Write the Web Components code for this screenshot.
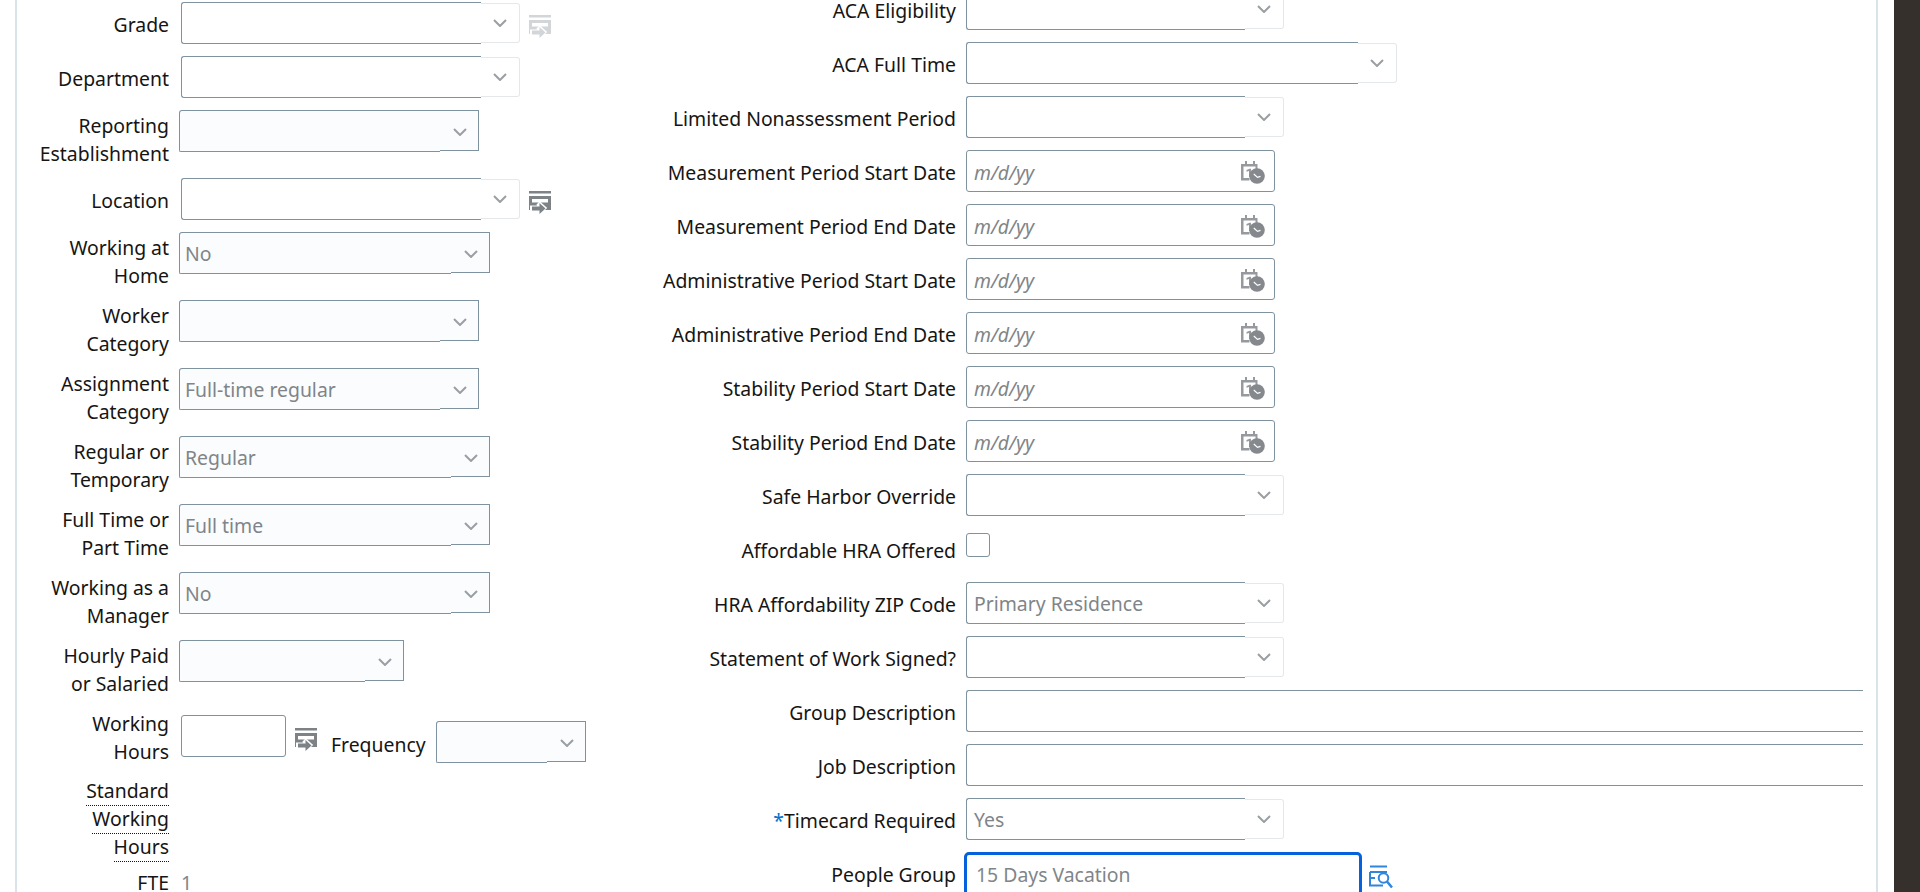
<!DOCTYPE html>
<html>
<head>
<meta charset="utf-8">
<title>Assignment details</title>
<style>
  html, body { margin: 0; height: 892px; overflow: hidden; background: #fff; }
  body { font: 19.4px/28px "Noto Sans", "Open Sans", sans-serif; color: #161513; }
</style>
</head>
<body>
<template id="detail-icon">
  <svg width="22" height="23" viewBox="0 0 22 23">
    <path fill="currentColor" d="M0 0h22v2.500H0zM0 5h22v14H0zM3 8v3.500h16V8z" fill-rule="evenodd"/>
    <path d="M1 17h11M9 12l5.500 5-5.500 5" fill="none" stroke="#fff" stroke-width="5"/>
    <path fill="currentColor" d="M3 15.500h7.500V12l6 5.500-6 5.500v-3.500H3z"/>
  </svg>
</template>

<script>
const chevron = `<svg width="14" height="8" viewBox="0 0 14 8"><path d="M1 1l6 6 6-6" fill="none" stroke="#9a9fa3" stroke-width="2"/></svg>`;

class PageShell extends HTMLElement {
  constructor() {
    super();
    this.attachShadow({ mode: 'open' }).innerHTML = `
      <style>
        :host { display: flex; height: 892px; overflow: hidden; }
        .panel {
          flex: 1;
          margin-left: 15px;
          margin-right: 16px;
          border: solid #d9e3ea;
          border-width: 0 2px;
          display: flex;
          padding-right: 13px;
        }
        .left { width: 623px; display: flex; flex-direction: column; padding-top: 2px; flex: none; }
        .right { flex: 1; min-width: 0; display: flex; flex-direction: column; margin-top: -12px; }
        .rail { width: 26px; background: #35302c; flex: none; }
      </style>
      <div class="panel">
        <div class="left"><slot name="left"></slot></div>
        <div class="right"><slot name="right"></slot></div>
      </div>
      <div class="rail"></div>`;
  }
}

class FormRow extends HTMLElement {
  constructor() {
    super();
    this.attachShadow({ mode: 'open' });
  }
  connectedCallback() {
    const w = this.getAttribute('label-width') || '152px';
    const gap = this.getAttribute('label-gap') || '12px';
    const req = this.hasAttribute('required') ? '<b>*</b>' : '';
    const dotted = this.hasAttribute('dotted');
    const lines = (this.getAttribute('label') || '').split('|');
    const text = lines.map(l => dotted ? `<u>${l}</u>` : l).join('<br>');
    const two = lines.length > 1;
    this.shadowRoot.innerHTML = `
      <style>
        :host { display: flex; align-items: flex-start; min-height: 42px; margin-bottom: ${this.getAttribute('after') || (two ? '10px' : '12px')}; }
        .label {
          width: ${w};
          flex: none;
          text-align: right;
          padding-top: ${this.getAttribute('label-top') || (two ? '2px' : '9px')};
          margin-right: ${gap};
        }
        b { font-weight: 400; color: #0572ce; }
        u { text-decoration: none; border-bottom: 1px dotted #161513; display: inline-block; line-height: 26px; height: 27px; vertical-align: top; }
        .field { display: flex; align-items: flex-start; gap: 8px; min-width: 0; flex: 1; }
      </style>
      <div class="label">${req}${text}</div>
      <div class="field"><slot></slot></div>`;
  }
}

class ComboBox extends HTMLElement {
  constructor() {
    super();
    this.attachShadow({ mode: 'open' });
  }
  connectedCallback() {
    const w = +this.getAttribute('width');
    const value = this.getAttribute('value') || '';
    const tint = this.hasAttribute('tint');
    this.shadowRoot.innerHTML = tint ? `
      <style>
        :host { display: block; width: ${w}px; height: 42px; margin-left: -2px; flex: none; }
        .box { box-sizing: border-box; height: 40px; background: #fbfcfe; border: solid #7e929f; border-width: 1px 1px 0 1px; border-radius: 3px 0 0 0; display: flex; align-items: center; justify-content: space-between; padding: 2px 11px 0 5px; color: #7f8589; }
        .box span { padding-top: 1px; }
        .foot { display: flex; height: 2px; }
        .l { box-sizing: border-box; width: ${w - 39}px; background: #fbfcfe; border: solid #7e929f; border-width: 0 0 1px 1px; border-radius: 0 0 0 3px; }
        .r { box-sizing: border-box; flex: 1; border-top: 1px solid #7e929f; }
      </style>
      <div class="box"><span>${value}</span>${chevron}</div>
      <div class="foot"><div class="l"></div><div class="r"></div></div>` : `
      <style>
        :host { display: flex; width: ${w}px; height: 42px; flex: none; }
        .input { box-sizing: border-box; flex: 1; border: solid #7e929f; border-width: 1px 0 1px 1px; border-radius: 3px 0 0 3px; padding: 0 7px; line-height: 41px; color: #7f8589; background: #fff; }
        .btn { box-sizing: border-box; width: 39px; border: solid #e4e8eb; border-width: 1px 1px 1px 0; border-radius: 0 3px 3px 0; height: 40px; display: flex; align-items: center; justify-content: center; margin-top: 1px; }
      </style>
      <div class="input">${value}</div><div class="btn">${chevron}</div>`;
  }
}

class TextBox extends HTMLElement {
  constructor() {
    super();
    this.attachShadow({ mode: 'open' });
  }
  connectedCallback() {
    const w = this.getAttribute('width');
    this.shadowRoot.innerHTML = `
      <style>
        :host { display: block; box-sizing: border-box; ${w ? `width:${w}px;flex:none;` : 'flex:1;'} height: 42px; border: 1px solid #7e929f; border-radius: 3px; background: #fff; }
        :host([open-end]) { border-right: 0; border-radius: 3px 0 0 3px; }
      </style>`;
  }
}

class DateBox extends HTMLElement {
  constructor() {
    super();
    this.attachShadow({ mode: 'open' }).innerHTML = `
      <style>
        :host { display: flex; box-sizing: border-box; width: 309px; height: 42px; border: 1px solid #7e929f; border-radius: 3px; align-items: center; justify-content: space-between; padding: 0 9px 0 7px; background: #fff; flex: none; }
        span { font-style: italic; color: #7f8589; padding-top: 3px; }
      </style>
      <span>m/d/yy</span>
      <svg width="24" height="23" viewBox="0 0 24 23" style="margin-top:3px">
        <path fill="#96999d" d="M4 0h2v3h6V0h2v3h2.500v6H14.500V5.500h-12V17h6v2.500H0V3h4z"/>
        <path fill="#96999d" d="M5.500 9l3-1.200h1.500V16H8v-6l-2.500 .8z"/>
        <circle cx="16" cy="15" r="7.800" fill="#85898d"/>
        <path d="M12.800 13l3.700 3.400 3-1" fill="none" stroke="#fff" stroke-width="1.200"/>
      </svg>`;
  }
}

class CheckBox extends HTMLElement {
  constructor() {
    super();
    this.attachShadow({ mode: 'open' }).innerHTML = `
      <style>
        :host { display: block; box-sizing: border-box; width: 24px; height: 24px; margin-top: 5px; border: 1px solid #7e929f; border-radius: 3px; background: #fff; flex: none; }
      </style>`;
  }
}

class DetailIcon extends HTMLElement {
  constructor() {
    super();
    this.attachShadow({ mode: 'open' });
    this.shadowRoot.innerHTML = `<style>
      :host { display: block; flex: none; color: #7c8286; line-height: 0; margin: 13px 0 0 1px; }
      :host([disabled]) { color: #d3d6d8; }
    </style>`;
    this.shadowRoot.append(document.getElementById('detail-icon').content.cloneNode(true));
  }
}

class HoursField extends HTMLElement {
  constructor() {
    super();
    this.attachShadow({ mode: 'open' }).innerHTML = `
      <style>
        :host { display: flex; align-items: flex-start; margin-top: 7px; flex: none; }
        .freq { margin: 16px 10px 0 14px; }
        ::slotted(combo-box) { margin: 6px 0 0 0; }
        ::slotted(detail-icon) { margin: 13px 0 0 9px; }
      </style>
      <slot name="hours"></slot>
      <slot name="icon"></slot>
      <span class="freq">Frequency</span>
      <slot name="freq"></slot>`;
  }
}

class PeopleGroup extends HTMLElement {
  constructor() {
    super();
    this.attachShadow({ mode: 'open' }).innerHTML = `
      <style>
        :host { display: flex; flex: none; margin-left: -2px; gap: 7px; align-items: flex-start; }
        .focus { box-sizing: border-box; width: 398px; height: 44px; border: 3px solid #0662dc; border-radius: 5px; padding: 0 9px; line-height: 40px; color: #7f8589; }
        svg { margin-top: 13px; }
      </style>
      <div class="focus">15 Days Vacation</div>
      <svg width="24" height="24" viewBox="0 0 24 24" fill="none" stroke="#2f86dc" stroke-width="2">
        <path d="M1 1.500h17M1 7h17M1 13h5M1 20.500h13M1 7v14.500"/>
        <circle cx="14.500" cy="13" r="4.800"/>
        <path d="M18 16.500l5 6" stroke-width="2.500"/>
      </svg>`;
  }
}

customElements.define('page-shell', PageShell);
customElements.define('form-row', FormRow);
customElements.define('combo-box', ComboBox);
customElements.define('text-box', TextBox);
customElements.define('date-box', DateBox);
customElements.define('check-box', CheckBox);
customElements.define('detail-icon', DetailIcon);
customElements.define('hours-field', HoursField);
customElements.define('people-group', PeopleGroup);
</script>

<page-shell>
  <div slot="left">
    <form-row label="Grade"><combo-box width="339"></combo-box><detail-icon disabled></detail-icon></form-row>
    <form-row label="Department"><combo-box width="339"></combo-box></form-row>
    <form-row label="Reporting|Establishment"><combo-box tint width="300"></combo-box></form-row>
    <form-row label="Location"><combo-box width="339"></combo-box><detail-icon></detail-icon></form-row>
    <form-row label="Working at|Home"><combo-box tint width="311" value="No"></combo-box></form-row>
    <form-row label="Worker|Category"><combo-box tint width="300"></combo-box></form-row>
    <form-row label="Assignment|Category"><combo-box tint width="300" value="Full-time regular"></combo-box></form-row>
    <form-row label="Regular or|Temporary"><combo-box tint width="311" value="Regular"></combo-box></form-row>
    <form-row label="Full Time or|Part Time"><combo-box tint width="311" value="Full time"></combo-box></form-row>
    <form-row label="Working as a|Manager"><combo-box tint width="311" value="No"></combo-box></form-row>
    <form-row label="Hourly Paid|or Salaried"><combo-box tint width="225"></combo-box></form-row>
    <form-row label="Working|Hours">
      <hours-field>
        <text-box slot="hours" width="105"></text-box>
        <detail-icon slot="icon"></detail-icon>
        <combo-box slot="freq" tint width="150"></combo-box>
      </hours-field>
    </form-row>
    <form-row label="Standard|Working|Hours" dotted after="0"></form-row>
    <form-row label="FTE" label-top="7px"><span style="color:#7f8589;padding-top:7px">1</span></form-row>
  </div>
  <div slot="right">
    <form-row label-width="316px" label-gap="10px" label="ACA Eligibility"><combo-box width="318"></combo-box></form-row>
    <form-row label-width="316px" label-gap="10px" label="ACA Full Time"><combo-box width="431"></combo-box></form-row>
    <form-row label-width="316px" label-gap="10px" label="Limited Nonassessment Period"><combo-box width="318"></combo-box></form-row>
    <form-row label-width="316px" label-gap="10px" label="Measurement Period Start Date"><date-box></date-box></form-row>
    <form-row label-width="316px" label-gap="10px" label="Measurement Period End Date"><date-box></date-box></form-row>
    <form-row label-width="316px" label-gap="10px" label="Administrative Period Start Date"><date-box></date-box></form-row>
    <form-row label-width="316px" label-gap="10px" label="Administrative Period End Date"><date-box></date-box></form-row>
    <form-row label-width="316px" label-gap="10px" label="Stability Period Start Date"><date-box></date-box></form-row>
    <form-row label-width="316px" label-gap="10px" label="Stability Period End Date"><date-box></date-box></form-row>
    <form-row label-width="316px" label-gap="10px" label="Safe Harbor Override"><combo-box width="318"></combo-box></form-row>
    <form-row label-width="316px" label-gap="10px" label="Affordable HRA Offered"><check-box></check-box></form-row>
    <form-row label-width="316px" label-gap="10px" label="HRA Affordability ZIP Code"><combo-box width="318" value="Primary Residence"></combo-box></form-row>
    <form-row label-width="316px" label-gap="10px" label="Statement of Work Signed?"><combo-box width="318"></combo-box></form-row>
    <form-row label-width="316px" label-gap="10px" label="Group Description"><text-box open-end></text-box></form-row>
    <form-row label-width="316px" label-gap="10px" label="Job Description"><text-box open-end></text-box></form-row>
    <form-row required label-width="316px" label-gap="10px" label="Timecard Required"><combo-box width="318" value="Yes"></combo-box></form-row>
    <form-row label-width="316px" label-gap="10px" label="People Group"><people-group></people-group></form-row>
  </div>
</page-shell>
</body>
</html>
